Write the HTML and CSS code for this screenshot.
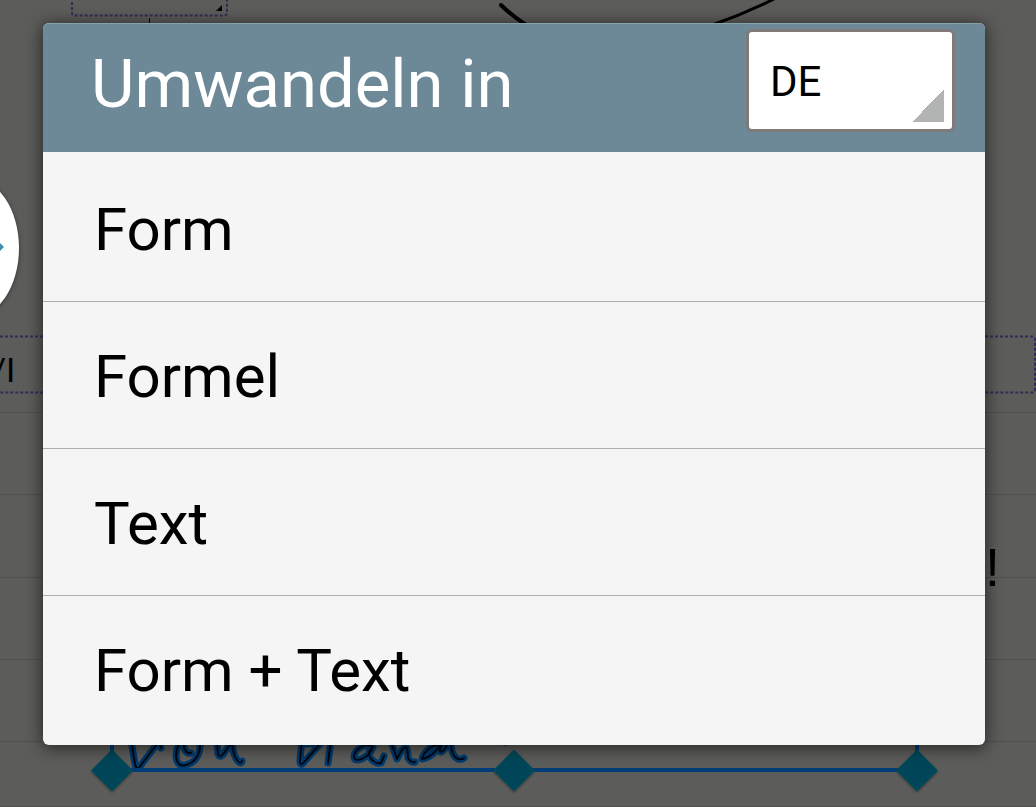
FILE: index.html
```html
<!DOCTYPE html>
<html lang="de">
<head>
    <meta charset="UTF-8">
    <meta name="viewport" content="width=device-width, initial-scale=1.0">
    <title>Umwandeln in</title>
    <link rel="stylesheet" href="styles.css">
</head>
<body>
    <!-- dimmed note page behind the dialog -->
    <svg class="note" aria-hidden="true">
        <g class="rule">
            <path d="M0 412.500H2000M0 494.500H2000M0 577.500H2000M0 659.500H2000M0 741.500H2000M0 806.500H2000"/>
        </g>
        <g class="frame">
            <path d="M72 2V13Q72 15.500 75 15.500H224Q227 15.500 227 13V0"/>
            <path d="M0 336.500H1032Q1035 336.500 1035 340V389Q1035 392.500 1032 392.500H0"/>
        </g>
        <path d="M222 5V11H216Z"/>
        <path class="thin" d="M149.500 18V30"/>
        <path class="pen" d="M501 5Q511 15 526 25"/>
        <path class="pen fine" d="M712 25Q744 14 774 -1"/>
        <ellipse class="knob" cx="-28" cy="248" rx="47" ry="70"/>
        <path class="arrow" d="M-3 240L4 247L-3 254Z"/>
        <text class="label" x="-8" y="382">/I</text>
        <text class="mark" x="985" y="586">!</text>

        <defs>
            <g id="ink">
                <path d="M131 740L135 764Q137 772 141 765L157 744M160 742L161 748"/>
                <path d="M180 741C173 756 176 768 186 765C197 762 201 752 200 741M185 741C182 748 186 754 191 753"/>
                <path d="M217 741L218 754Q220 759 224 753L232 742Q233 755 237 760T242 761"/>
                <path d="M302 740L300 760Q300 768 305 761L321 743M305 744L321 743M331 740L328 763"/>
                <path d="M373 747C366 741 354 750 354 757C355 765 372 755 372 748C364 754 374 765 381 763L384 756"/>
                <path d="M391 742L397 759Q402 748 406 747Q408 750 408 758Q411 763 415 762"/>
                <path d="M440 746C432 742 423 754 422 759C430 758 437 751 443 741Q438 752 441 752Q445 751 448 742"/>
                <path d="M451 742Q451 756 458 759Q462 760 464 758"/>
            </g>
        </defs>
        <use class="ink-glow" href="#ink"/>
        <use class="ink" href="#ink"/>
        <circle class="dot" cx="505" cy="741" r="5"/>

        <path class="selection" d="M112 740V770H917V740"/>
        <g class="handle">
            <path d="M112 750L132.500 770.500L112 791L91.500 770.500Z"/>
            <path d="M514 750L534.500 770.500L514 791L493.500 770.500Z"/>
            <path d="M917 750L937.500 770.500L917 791L896.500 770.500Z"/>
        </g>
    </svg>

    <main class="dialog" role="dialog" aria-labelledby="title">
        <div class="header">
            <h1 id="title">Umwandeln in</h1>
            <select class="lang" aria-label="Sprache">
                <option>DE</option>
            </select>
        </div>
        <div class="list">
            <button type="button">Form</button>
            <button type="button">Formel</button>
            <button type="button">Text</button>
            <button type="button">Form + Text</button>
        </div>
    </main>
</body>
</html>
```
FILE: styles.css
```css
*{
    box-sizing: border-box;
}
body{
    margin: 0;
    padding: 23px 51px 62px 43px;
    min-height: 100vh;
    background-color: #5c5c5a;
    font-family: Roboto, sans-serif;
    color: #000;
}

.note{
    position: absolute;
    top: 0;
    left: 0;
    width: 100%;
    height: 100%;
}
.rule{
    stroke: #50504e;
}
.frame{
    fill: none;
    stroke: #2f2d58;
    stroke-width: 2;
    stroke-dasharray: 3 2;
}
.thin{
    stroke: #000;
}
.pen{
    fill: none;
    stroke: #000;
    stroke-width: 4;
    stroke-linecap: round;
}
.fine{
    stroke-width: 3;
}
.knob{
    fill: #fff;
    filter: drop-shadow(0 1px 2px #333);
}
.arrow{
    fill: #3d90ac;
}
.label{
    font-size: 34px;
}
.mark{
    font-family: "Liberation Sans", sans-serif;
    font-size: 54px;
}
.ink, .ink-glow{
    fill: none;
    stroke: #000814;
    stroke-width: 2;
    stroke-linecap: round;
    stroke-linejoin: round;
}
.ink-glow{
    stroke: #003a6c;
    stroke-width: 7;
}
.dot{
    fill: #00485e;
}
.selection{
    fill: none;
    stroke: #003c78;
    stroke-width: 4;
}
.handle{
    fill: #004658;
    stroke: #00505f;
    filter: drop-shadow(0 1px 1px #333);
}

.dialog{
    position: relative;
    border-radius: 6px;
    overflow: hidden;
    background-color: #f5f5f5;
    box-shadow: 0 2px 16px 1px rgba(0, 0, 0, 0.6);
}
.header{
    display: flex;
    justify-content: space-between;
    align-items: flex-start;
    height: 129px;
    padding: 5px 30px 0 48px;
    background-color: #6d8997;
    border-top: 1px solid #86a0ac;
}
h1{
    margin: 0;
    padding-top: 15px;
    font-size: 67px;
    line-height: 80px;
    font-weight: 400;
    color: #fff;
}
.lang{
    appearance: none;
    width: 209px;
    height: 103px;
    padding: 2px 21px 0;
    border: 3px solid #7e7a79;
    border-radius: 6px;
    background: linear-gradient(135deg, transparent 50%, #b2b4b4 50%) right 8px bottom 7px / 32px 32px no-repeat #fff;
    font-family: inherit;
    font-size: 42px;
    color: #000;
}
.list{
    display: flex;
    flex-direction: column;
    padding: 3px 0 2px;
}
.list button{
    height: 147px;
    padding: 2px 51px 0;
    border: none;
    border-bottom: 1px solid #adadad;
    background: none;
    font-family: inherit;
    font-size: 60px;
    text-align: left;
    color: #000;
}
.list button:last-child{
    border-bottom-color: transparent;
}
```
